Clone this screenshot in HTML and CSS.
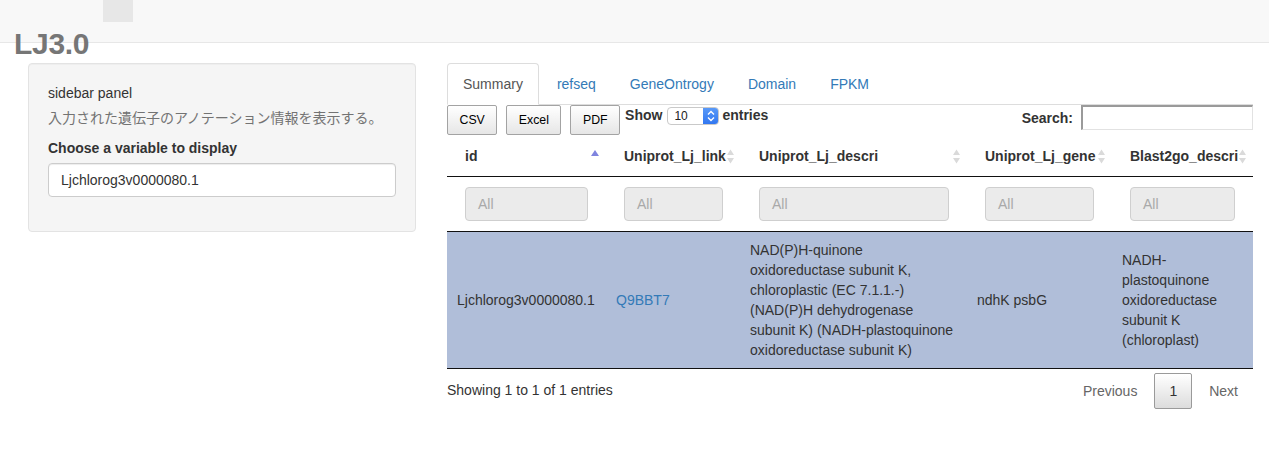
FILE: index.html
```html
<!DOCTYPE html>
<html lang="ja">
<head>
<meta charset="utf-8">
<title>LJ3.0</title>
<link rel="stylesheet" href="styles.css">
</head>
<body>
<div class="navbar"><div class="nav-square"></div></div>
<h2 class="title">LJ3.0</h2>
<div class="layout">
  <aside class="well">
    <div class="plain">sidebar panel</div>
    <span class="help-block">入力された遺伝子のアノテーション情報を表示する。</span>
    <div class="form-group">
      <label class="control-label">Choose a variable to display</label>
      <div class="form-control">Ljchlorog3v0000080.1</div>
    </div>
  </aside>
  <main class="main">
    <ul class="tabs">
      <li class="tab active"><a>Summary</a></li>
      <li class="tab"><a>refseq</a></li>
      <li class="tab"><a>GeneOntrogy</a></li>
      <li class="tab"><a>Domain</a></li>
      <li class="tab"><a>FPKM</a></li>
    </ul>
    <div class="controls">
      <div class="dt-buttons">
        <span class="dt-button">CSV</span>
        <span class="dt-button">Excel</span>
        <span class="dt-button">PDF</span>
      </div>
      <div class="length">
        <span class="bold">Show</span>
        <span class="len-select"><span class="len-val">10</span><span class="len-arrow"><svg width="16" height="18" viewBox="0 0 16 18"><path d="M5 7.5 L8 4.5 L11 7.5" fill="none" stroke="#fff" stroke-width="1.4"/><path d="M5 10.5 L8 13.5 L11 10.5" fill="none" stroke="#fff" stroke-width="1.4"/></svg></span></span>
        <span class="bold">entries</span>
      </div>
      <div class="search">
        <span class="bold">Search:</span>
        <span class="search-input"></span>
      </div>
    </div>
    <table class="dt">
      <colgroup>
        <col class="c1"><col class="c2"><col class="c3"><col class="c4"><col class="c5">
      </colgroup>
      <thead>
        <tr class="head-row">
          <th>id<span class="sort asc"><svg width="8" height="6" viewBox="0 0 8 6"><path d="M0 6 L4 0 L8 6 Z" fill="#7f84df"/></svg></span></th>
          <th>Uniprot_Lj_link<span class="sort"><svg width="9" height="15" viewBox="0 0 9 15"><path d="M1 6 L4.5 0.5 L8 6 Z M1 9 L8 9 L4.5 14.5 Z" fill="#dadada"/></svg></span></th>
          <th>Uniprot_Lj_descri<span class="sort"><svg width="9" height="15" viewBox="0 0 9 15"><path d="M1 6 L4.5 0.5 L8 6 Z M1 9 L8 9 L4.5 14.5 Z" fill="#dadada"/></svg></span></th>
          <th>Uniprot_Lj_gene<span class="sort"><svg width="9" height="15" viewBox="0 0 9 15"><path d="M1 6 L4.5 0.5 L8 6 Z M1 9 L8 9 L4.5 14.5 Z" fill="#dadada"/></svg></span></th>
          <th>Blast2go_descri<span class="sort"><svg width="9" height="15" viewBox="0 0 9 15"><path d="M1 6 L4.5 0.5 L8 6 Z M1 9 L8 9 L4.5 14.5 Z" fill="#dadada"/></svg></span></th>
        </tr>
        <tr class="filter-row">
          <td><span class="filter">All</span></td>
          <td><span class="filter">All</span></td>
          <td><span class="filter">All</span></td>
          <td><span class="filter">All</span></td>
          <td><span class="filter">All</span></td>
        </tr>
      </thead>
      <tbody>
        <tr class="selected">
          <td>Ljchlorog3v0000080.1</td>
          <td><a class="link">Q9BBT7</a></td>
          <td>NAD(P)H-quinone oxidoreductase subunit K, chloroplastic (EC 7.1.1.-) (NAD(P)H dehydrogenase subunit K) (NADH-plastoquinone oxidoreductase subunit K)</td>
          <td>ndhK psbG</td>
          <td>NADH-plastoquinone oxidoreductase subunit K (chloroplast)</td>
        </tr>
      </tbody>
    </table>
    <div class="footer">
      <div class="info">Showing 1 to 1 of 1 entries</div>
      <div class="paginate">
        <span class="pbtn disabled">Previous</span>
        <span class="pbtn current">1</span>
        <span class="pbtn disabled">Next</span>
      </div>
    </div>
  </main>
</div>
</body>
</html>
```

FILE: styles.css
```css
* { box-sizing: border-box; }
html, body { margin: 0; padding: 0; background: #fff; }
body {
  font-family: "Liberation Sans", Arial, "Noto Sans CJK JP", sans-serif;
  font-size: 14px;
  line-height: 20px;
  color: #333;
}
.navbar {
  height: 43px;
  background: #f8f8f8;
  border-bottom: 1px solid #e7e7e7;
}
.nav-square {
  margin-left: 103px;
  width: 30px;
  height: 22px;
  background: #e7e7e7;
}
.title {
  margin: -16px 0 0 14px;
  font-size: 30px;
  line-height: 33px;
  font-weight: bold;
  color: #767676;
  letter-spacing: -0.3px;
}
.layout {
  display: flex;
  align-items: flex-start;
  margin-top: 3px;
  padding-left: 28px;
}
.well {
  width: 388px;
  flex: none;
  background: #f5f5f5;
  border: 1px solid #e3e3e3;
  border-radius: 4px;
  padding: 19px;
  box-shadow: inset 0 1px 1px rgba(0,0,0,0.03);
}
.help-block {
  display: block;
  margin: 5px 0 10px;
  color: #737373;
  font-family: "Liberation Sans", "Noto Sans CJK JP", sans-serif;
}
.form-group { margin-bottom: 15px; }
.control-label {
  display: block;
  font-weight: bold;
  margin-bottom: 5px;
}
.form-control {
  height: 34px;
  border: 1px solid #ccc;
  border-radius: 4px;
  background: #fff;
  padding: 6px 12px;
  box-shadow: inset 0 1px 1px rgba(0,0,0,0.075);
}
.main {
  width: 806px;
  margin-left: 31px;
}
.tabs {
  list-style: none;
  margin: 0;
  padding: 0;
  display: flex;
  border-bottom: 1px solid #ddd;
}
.tab { margin-bottom: -1px; margin-right: 2px; }
.tab a {
  display: block;
  padding: 10px 15px;
  line-height: 20px;
  border: 1px solid transparent;
  border-radius: 4px 4px 0 0;
  color: #337ab7;
}
.tab.active a {
  color: #555;
  background: #fff;
  border-color: #ddd #ddd transparent;
}
.controls {
  display: flex;
  align-items: flex-start;
  height: 31px;
}
.dt-buttons { display: flex; gap: 9px; }
.dt-button {
  display: flex;
  align-items: center;
  justify-content: center;
  height: 30px;
  padding: 0 11.5px;
  font-size: 12.32px;
  color: #000;
  border: 1px solid #a3a3a3;
  border-radius: 2px;
  background: linear-gradient(to bottom, #ffffff 0%, #e6e6e6 100%);
}
.bold { font-weight: bold; }
.length {
  display: flex;
  align-items: flex-start;
  margin-left: 5px;
}
.len-select {
  display: flex;
  width: 52px;
  height: 18px;
  margin: 2px 3px 0 5px;
  border: 1px solid #c9c9c9;
  border-radius: 4px;
  background: #fff;
  overflow: hidden;
}
.len-val {
  flex: 1;
  font-size: 12px;
  line-height: 16px;
  padding-left: 6px;
  color: #222;
}
.len-arrow {
  width: 16px;
  margin: -1px -1px -1px 0;
  background: linear-gradient(to bottom, #5b9bf8, #2f75f0);
  border-radius: 0 4px 4px 0;
  display: flex;
  align-items: center;
}
.len-arrow svg { display: block; }
.search {
  margin-left: auto;
  display: flex;
  align-items: center;
  gap: 8px;
  height: 25px;
}
.search-input {
  width: 172px;
  height: 25px;
  background: #fff;
  border: 1px solid;
  border-color: #9a9a9a #e2e2e2 #e2e2e2 #9a9a9a;
  border-width: 2px 1px 1px 2px;
}
.dt {
  width: 806px;
  border-collapse: separate;
  border-spacing: 0;
  table-layout: fixed;
}
.c1 { width: 159px; }
.c2 { width: 135px; }
.c3 { width: 226px; }
.c4 { width: 145px; }
.c5 { width: 141px; }
.head-row th {
  position: relative;
  text-align: left;
  font-weight: bold;
  padding: 10px 18px;
  white-space: nowrap;
  border-bottom: 1px solid #111;
}
.sort {
  position: absolute;
  right: 6px;
  top: 13px;
  line-height: 0;
}
.sort.asc { top: 14px; right: 7px; }
.filter-row td {
  padding: 10px 18px;
  border-bottom: 1px solid #111;
}
.filter {
  display: block;
  height: 34px;
  line-height: 32px;
  padding-left: 12px;
  color: #a9a9a9;
  background: #ebebeb;
  border: 1px solid #cfcfcf;
  border-radius: 4px;
}
tbody td {
  padding: 8px 10px;
  vertical-align: middle;
  border-bottom: 1px solid #111;
}
tbody td:nth-child(3) { padding-left: 9px; padding-right: 10px; }
.selected td { background: #b0bed9; }
.link { color: #337ab7; }
.footer {
  display: flex;
  justify-content: space-between;
  align-items: flex-start;
}
.info { padding-top: 11px; }
.paginate {
  display: flex;
  padding-top: 4px;
}
.pbtn {
  display: block;
  padding: 7px 14px;
  margin-left: 2px;
  border: 1px solid transparent;
  border-radius: 2px;
  color: #666;
}
.pbtn.current {
  color: #333;
  border-color: #9a9a9a;
  background: linear-gradient(to bottom, #ffffff 0%, #dcdcdc 100%);
}
```
